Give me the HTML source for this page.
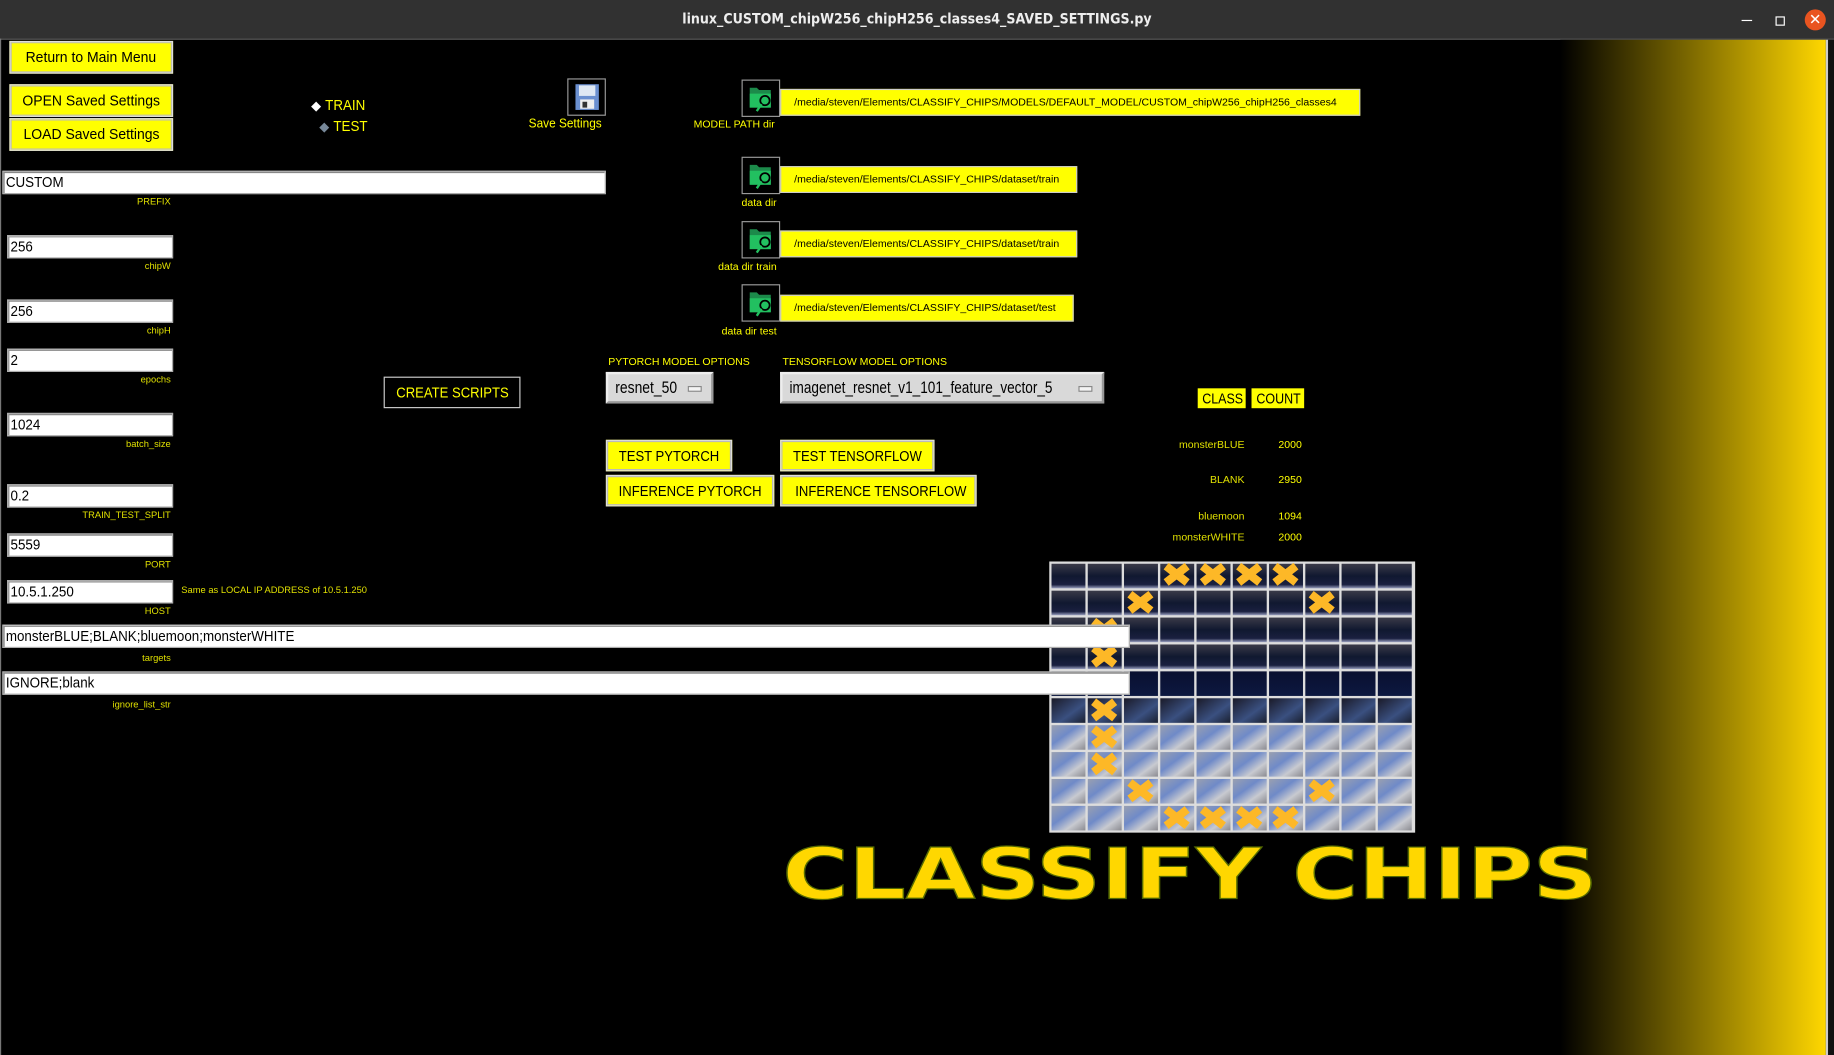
<!DOCTYPE html>
<html><head><meta charset="utf-8"><style>
html,body{margin:0;padding:0;background:#000;overflow:hidden;width:1834px;height:1055px}
#w{position:absolute;left:0;top:0;width:1568px;height:902px;transform:scale(1.16964);transform-origin:0 0;background:#000;font-family:"Liberation Sans",sans-serif;overflow:hidden}
#w div{white-space:nowrap}
.a{position:absolute}
.n{display:inline-block;transform:scaleX(.86);transform-origin:center}
.nl{display:inline-block;transform:scaleX(.88);transform-origin:left center}
.title{left:0;top:0;width:1568px;height:33px;background:#313131;border-bottom:1px solid #555;color:#eee;font-weight:bold;font-size:12px;text-align:center;line-height:33px;font-family:"DejaVu Sans","Liberation Sans",sans-serif}
.btn{position:absolute;background:#ffff00;border:1px solid #ddd;box-shadow:inset 0 0 0 1px #bbb;color:#000;font-size:13px;text-align:center;box-sizing:border-box}
.inp{position:absolute;background:#fff;border:1px solid #aaa;box-shadow:inset 1px 1px 0 #888;box-sizing:border-box;font-size:13px;color:#000;padding-left:2px}
.lbl{position:absolute;color:#e0e000;font-size:8px;text-align:right}
.y{color:#ffff00}
.path{position:absolute;background:#ffff00;border:1px solid #ccc;box-sizing:border-box;font-size:9px;color:#000;padding-left:11px;height:23px;line-height:21px}
.ic{position:absolute;width:33px;height:32px;background:#000;border:1px solid #999;box-sizing:border-box}
.dd{position:absolute;background:#d9d9d9;border:2px solid #eee;border-right-color:#999;border-bottom-color:#999;box-sizing:border-box;font-size:14px;color:#000;padding-left:6px}
.dd i{position:absolute;right:8px;top:10px;width:10px;height:3px;background:#f4f4f4;border:1px solid #888}
</style></head><body><div id="w">
<div class="a title"><span class="n" style="transform:scaleX(.9)">linux_CUSTOM_chipW256_chipH256_classes4_SAVED_SETTINGS.py</span></div>
<div class="a" style="left:1489px;top:17px;width:9px;height:1px;background:#fff"></div>
<div class="a" style="left:1518px;top:14px;width:6px;height:6px;border:1px solid #fff"></div>
<div class="a" style="left:1543px;top:8px;width:18px;height:18px;border-radius:50%;background:#e95420;color:#fff;font-size:13px;line-height:18px;text-align:center">✕</div>
<div class="a" style="left:0;top:33px;width:1px;height:869px;background:#777"></div>
<div class="a" style="left:1334px;top:34px;width:227px;height:868px;background:linear-gradient(to right,#000,#ffd700)"></div>
<div class="a" style="left:1561px;top:34px;width:2px;height:868px;background:#ccc"></div>
<div class="a" style="left:1563px;top:34px;width:5px;height:868px;background:#111"></div>

<div class="btn" style="left:8px;top:35px;width:140px;height:28px;line-height:26px"><span class="n" style="transform:scaleX(.92)">Return to Main Menu</span></div>
<div class="btn" style="left:8px;top:72px;width:140px;height:28px;line-height:26px"><span class="n" style="transform:scaleX(.92)">OPEN Saved Settings</span></div>
<div class="btn" style="left:8px;top:101px;width:140px;height:28px;line-height:26px"><span class="n" style="transform:scaleX(.92)">LOAD Saved Settings</span></div>

<div class="a y" style="left:266px;top:82px;font-size:13px"><span style="color:#fff;font-size:11px">◆</span> <span class="nl">TRAIN</span></div>
<div class="a y" style="left:273px;top:100px;font-size:13px"><span style="color:#789;font-size:11px">◆</span> <span class="nl">TEST</span></div>

<div class="ic" style="left:485px;top:67px"><svg width="31" height="30" viewBox="0 0 31 30"><rect x="6" y="4" width="20" height="22" fill="#6a8fd0"/><rect x="9" y="5" width="14" height="9" fill="#dfe8f4"/><rect x="10" y="17" width="12" height="8" fill="#eee"/><rect x="12" y="19" width="4" height="5" fill="#333"/></svg></div>
<div class="a y" style="left:452px;top:100px;font-size:11px"><span class="nl" style="transform:scaleX(.92)">Save Settings</span></div>

<div class="inp" style="left:2px;top:146px;width:516px;height:20px;line-height:18px"><span class="nl">CUSTOM</span></div>
<div class="lbl" style="left:60px;top:168px;width:86px">PREFIX</div>

<div class="inp" style="left:6px;top:201px;width:142px;height:20px;line-height:18px"><span class="nl">256</span></div>
<div class="lbl" style="left:60px;top:223px;width:86px">chipW</div>
<div class="inp" style="left:6px;top:256px;width:142px;height:20px;line-height:18px"><span class="nl">256</span></div>
<div class="lbl" style="left:60px;top:278px;width:86px">chipH</div>
<div class="inp" style="left:6px;top:298px;width:142px;height:20px;line-height:18px"><span class="nl">2</span></div>
<div class="lbl" style="left:60px;top:320px;width:86px">epochs</div>
<div class="inp" style="left:6px;top:353px;width:142px;height:20px;line-height:18px"><span class="nl">1024</span></div>
<div class="lbl" style="left:60px;top:375px;width:86px">batch_size</div>
<div class="inp" style="left:6px;top:414px;width:142px;height:20px;line-height:18px"><span class="nl">0.2</span></div>
<div class="lbl" style="left:40px;top:436px;width:106px">TRAIN_TEST_SPLIT</div>
<div class="inp" style="left:6px;top:456px;width:142px;height:20px;line-height:18px"><span class="nl">5559</span></div>
<div class="lbl" style="left:60px;top:478px;width:86px">PORT</div>
<div class="inp" style="left:6px;top:496px;width:142px;height:20px;line-height:18px"><span class="nl">10.5.1.250</span></div>
<div class="a" style="left:155px;top:500px;font-size:8px;color:#e0e000">Same as LOCAL IP ADDRESS of 10.5.1.250</div>
<div class="lbl" style="left:60px;top:518px;width:86px">HOST</div>

<div class="a" style="left:328px;top:322px;width:117px;height:27px;border:1px solid #ccc;box-sizing:border-box;color:#ffff00;font-size:13px;text-align:center;line-height:25px"><span class="n">CREATE SCRIPTS</span></div>

<div class="ic" style="left:634px;top:68px"><svg width="31" height="30" viewBox="0 0 31 30"><path d="M6 6h6l2 2h10v15H6z" fill="#1c8a4a"/><path d="M6 11h18v12H6z" fill="#22c060"/><circle cx="19" cy="17" r="4" fill="none" stroke="#000" stroke-width="1.5"/><path d="M16 20l-4 6" stroke="#22c060" stroke-width="2"/></svg></div>
<div class="path" style="left:667px;top:76px;width:496px">/media/steven/Elements/CLASSIFY_CHIPS/MODELS/DEFAULT_MODEL/CUSTOM_chipW256_chipH256_classes4</div>
<div class="a y" style="left:593px;top:101px;font-size:9px">MODEL PATH dir</div>

<div class="ic" style="left:634px;top:134px"><svg width="31" height="30" viewBox="0 0 31 30"><path d="M6 6h6l2 2h10v15H6z" fill="#1c8a4a"/><path d="M6 11h18v12H6z" fill="#22c060"/><circle cx="19" cy="17" r="4" fill="none" stroke="#000" stroke-width="1.5"/><path d="M16 20l-4 6" stroke="#22c060" stroke-width="2"/></svg></div>
<div class="path" style="left:667px;top:142px;width:254px">/media/steven/Elements/CLASSIFY_CHIPS/dataset/train</div>
<div class="a y" style="left:634px;top:168px;font-size:9px">data dir</div>

<div class="ic" style="left:634px;top:189px"><svg width="31" height="30" viewBox="0 0 31 30"><path d="M6 6h6l2 2h10v15H6z" fill="#1c8a4a"/><path d="M6 11h18v12H6z" fill="#22c060"/><circle cx="19" cy="17" r="4" fill="none" stroke="#000" stroke-width="1.5"/><path d="M16 20l-4 6" stroke="#22c060" stroke-width="2"/></svg></div>
<div class="path" style="left:667px;top:197px;width:254px">/media/steven/Elements/CLASSIFY_CHIPS/dataset/train</div>
<div class="a y" style="left:614px;top:223px;font-size:9px">data dir train</div>

<div class="ic" style="left:634px;top:243px"><svg width="31" height="30" viewBox="0 0 31 30"><path d="M6 6h6l2 2h10v15H6z" fill="#1c8a4a"/><path d="M6 11h18v12H6z" fill="#22c060"/><circle cx="19" cy="17" r="4" fill="none" stroke="#000" stroke-width="1.5"/><path d="M16 20l-4 6" stroke="#22c060" stroke-width="2"/></svg></div>
<div class="path" style="left:667px;top:252px;width:251px">/media/steven/Elements/CLASSIFY_CHIPS/dataset/test</div>
<div class="a y" style="left:617px;top:278px;font-size:9px">data dir test</div>

<div class="a y" style="left:520px;top:304px;font-size:9px">PYTORCH MODEL OPTIONS</div>
<div class="a y" style="left:669px;top:304px;font-size:9px">TENSORFLOW MODEL OPTIONS</div>
<div class="dd" style="left:518px;top:318px;width:92px;height:27px;line-height:23px"><span class="nl" style="transform:scaleX(.85)">resnet_50</span><i></i></div>
<div class="dd" style="left:667px;top:318px;width:277px;height:27px;line-height:23px"><span class="nl" style="transform:scaleX(.83)">imagenet_resnet_v1_101_feature_vector_5</span><i></i></div>

<div class="btn" style="left:518px;top:376px;width:108px;height:27px;line-height:25px"><span class="n">TEST PYTORCH</span></div>
<div class="btn" style="left:667px;top:376px;width:132px;height:27px;line-height:25px"><span class="n">TEST TENSORFLOW</span></div>
<div class="btn" style="left:518px;top:406px;width:144px;height:27px;line-height:25px"><span class="n">INFERENCE PYTORCH</span></div>
<div class="btn" style="left:667px;top:406px;width:168px;height:27px;line-height:25px"><span class="n">INFERENCE TENSORFLOW</span></div>

<div class="a" style="left:1024px;top:332px;width:41px;height:17px;background:#ffff00;font-size:13px;line-height:17px;text-align:center"><span class="n" style="transform:scaleX(.82)">CLASS</span></div>
<div class="a" style="left:1070px;top:332px;width:45px;height:17px;background:#ffff00;font-size:13px;line-height:17px;text-align:center"><span class="n" style="transform:scaleX(.82)">COUNT</span></div>
<div class="lbl" style="left:960px;top:375px;width:104px;font-size:9px">monsterBLUE</div><div class="a y" style="left:1093px;top:375px;font-size:9px">2000</div>
<div class="lbl" style="left:960px;top:405px;width:104px;font-size:9px">BLANK</div><div class="a y" style="left:1093px;top:405px;font-size:9px">2950</div>
<div class="lbl" style="left:960px;top:436px;width:104px;font-size:9px">bluemoon</div><div class="a y" style="left:1093px;top:436px;font-size:9px">1094</div>
<div class="lbl" style="left:960px;top:454px;width:104px;font-size:9px">monsterWHITE</div><div class="a y" style="left:1093px;top:454px;font-size:9px">2000</div>

<svg class="a" style="left:897px;top:480px" width="313" height="232" viewBox="0 0 313 232">
<defs>
<linearGradient id="dk" x1="0" y1="0" x2="0" y2="1"><stop offset="0" stop-color="#3a3a48"/><stop offset=".5" stop-color="#101830"/><stop offset=".85" stop-color="#1a2040"/><stop offset="1" stop-color="#9aa0c0"/></linearGradient>
<linearGradient id="nv" x1="0" y1="0" x2="0" y2="1"><stop offset="0" stop-color="#0a1030"/><stop offset="1" stop-color="#0c1840"/></linearGradient>
<linearGradient id="lt" x1="0" y1="0" x2="1" y2="1"><stop offset="0" stop-color="#9aa0b0"/><stop offset=".4" stop-color="#6f8ac8"/><stop offset=".7" stop-color="#c8cad0"/><stop offset="1" stop-color="#8a8a90"/></linearGradient>
<linearGradient id="md" x1="0" y1="0" x2="1" y2="1"><stop offset="0" stop-color="#1a1a28"/><stop offset=".6" stop-color="#3a5080"/><stop offset="1" stop-color="#1a2030"/></linearGradient>
<g id="x"><path d="M-9 -7L9 7M9 -7L-9 7" stroke="#fdb827" stroke-width="7"/></g>
<g id="rdk"><rect x="2" width="29" height="21" fill="url(#dk)"/><rect x="33" width="29" height="21" fill="url(#dk)"/><rect x="64" width="29" height="21" fill="url(#dk)"/><rect x="95" width="29" height="21" fill="url(#dk)"/><rect x="126" width="29" height="21" fill="url(#dk)"/><rect x="157" width="29" height="21" fill="url(#dk)"/><rect x="188" width="29" height="21" fill="url(#dk)"/><rect x="219" width="29" height="21" fill="url(#dk)"/><rect x="250" width="29" height="21" fill="url(#dk)"/><rect x="281" width="29" height="21" fill="url(#dk)"/></g>
<g id="rnv"><rect x="2" width="29" height="21" fill="url(#nv)"/><rect x="33" width="29" height="21" fill="url(#nv)"/><rect x="64" width="29" height="21" fill="url(#nv)"/><rect x="95" width="29" height="21" fill="url(#nv)"/><rect x="126" width="29" height="21" fill="url(#nv)"/><rect x="157" width="29" height="21" fill="url(#nv)"/><rect x="188" width="29" height="21" fill="url(#nv)"/><rect x="219" width="29" height="21" fill="url(#nv)"/><rect x="250" width="29" height="21" fill="url(#nv)"/><rect x="281" width="29" height="21" fill="url(#nv)"/></g>
<g id="rmd"><rect x="2" width="29" height="21" fill="url(#md)"/><rect x="33" width="29" height="21" fill="url(#md)"/><rect x="64" width="29" height="21" fill="url(#md)"/><rect x="95" width="29" height="21" fill="url(#md)"/><rect x="126" width="29" height="21" fill="url(#md)"/><rect x="157" width="29" height="21" fill="url(#md)"/><rect x="188" width="29" height="21" fill="url(#md)"/><rect x="219" width="29" height="21" fill="url(#md)"/><rect x="250" width="29" height="21" fill="url(#md)"/><rect x="281" width="29" height="21" fill="url(#md)"/></g>
<g id="rlt"><rect x="2" width="29" height="21" fill="url(#lt)"/><rect x="33" width="29" height="21" fill="url(#lt)"/><rect x="64" width="29" height="21" fill="url(#lt)"/><rect x="95" width="29" height="21" fill="url(#lt)"/><rect x="126" width="29" height="21" fill="url(#lt)"/><rect x="157" width="29" height="21" fill="url(#lt)"/><rect x="188" width="29" height="21" fill="url(#lt)"/><rect x="219" width="29" height="21" fill="url(#lt)"/><rect x="250" width="29" height="21" fill="url(#lt)"/><rect x="281" width="29" height="21" fill="url(#lt)"/></g>
</defs>
<rect width="313" height="232" fill="#ddd"/>
<use href="#rdk" y="2"/><use href="#rdk" y="25"/><use href="#rdk" y="48"/><use href="#rdk" y="71"/>
<use href="#rnv" y="94"/><use href="#rmd" y="117"/>
<use href="#rlt" y="140"/><use href="#rlt" y="163"/><use href="#rlt" y="186"/><use href="#rlt" y="209"/>
<use href="#x" x="109" y="11"/><use href="#x" x="140" y="11"/><use href="#x" x="171" y="11"/><use href="#x" x="202" y="11"/>
<use href="#x" x="78" y="35"/><use href="#x" x="233" y="35"/>
<use href="#x" x="47" y="58"/><use href="#x" x="47" y="81"/><use href="#x" x="47" y="127"/><use href="#x" x="47" y="150"/><use href="#x" x="47" y="173"/>
<use href="#x" x="78" y="196"/><use href="#x" x="233" y="196"/>
<use href="#x" x="109" y="219"/><use href="#x" x="140" y="219"/><use href="#x" x="171" y="219"/><use href="#x" x="202" y="219"/>
</svg>

<div class="inp" style="left:2px;top:534px;width:964px;height:20px;line-height:18px"><span class="nl">monsterBLUE;BLANK;bluemoon;monsterWHITE</span></div>
<div class="lbl" style="left:60px;top:558px;width:86px">targets</div>
<div class="inp" style="left:2px;top:574px;width:964px;height:20px;line-height:18px"><span class="nl">IGNORE;blank</span></div>
<div class="lbl" style="left:40px;top:598px;width:106px">ignore_list_str</div>

<svg class="a" style="left:660px;top:710px" width="720" height="70"><text x="9" y="58" textLength="697" lengthAdjust="spacingAndGlyphs" font-family="DejaVu Sans, Liberation Sans, sans-serif" font-weight="bold" font-size="60" fill="#ffd700" stroke="#556b00" stroke-width="1">CLASSIFY CHIPS</text></svg>
</div></body></html>
